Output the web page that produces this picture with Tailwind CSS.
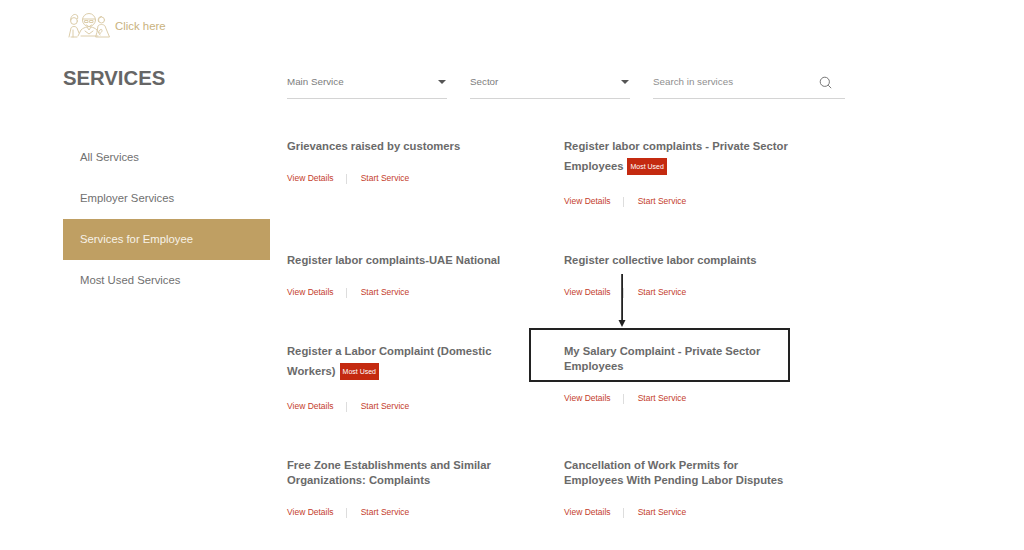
<!DOCTYPE html>
<html>
<head>
<meta charset="utf-8">
<script src="https://cdn.jsdelivr.net/npm/@tailwindcss/browser@4"></script>
</head>
<body class="bg-white">
<div class="relative w-[1024px] h-[550px] overflow-hidden bg-white font-['Liberation_Sans',Arial,sans-serif] text-[#6a6a6a]">
  <header class="h-[52px] pl-[68px] pt-[12px] flex items-start gap-[5px]">
    <svg width="42" height="27" viewBox="0 0 42 27" fill="none" stroke="#dccdaa" stroke-width="1" stroke-linecap="round" stroke-linejoin="round">
      <circle cx="6" cy="9" r="3.4"/>
      <path d="M2.6 8c0-4 3-6 5-5.500 2 .5 2.500 2 2 4M1 25l2-9c1-2 5-2 6 0l2 5M5 18v7M3 25h6"/>
      <circle cx="21" cy="8" r="6.500"/>
      <path d="M15 7h12M17 8.500h3v2h-3zM22 8.500h3v2h-3zM18.500 13l2.500 2 2.500-2"/>
      <path d="M10 24l3-6c2-2 4-2.500 6-3l2 3 2-3c2 .5 4 1 6 3l3 5M13 24h17M17 19l4 3 4-3"/>
      <circle cx="33.500" cy="8" r="3"/>
      <path d="M33.500 4.500c-2.500 0-4 2-3 5M29 20l1-6c1-2 6-2 7 0l2 5 2.500 6H28zM32 18c.5-1 2-1 2 .5s-1 2-2 3c-1-1-2-2.500 0-3.500z"/>
    </svg>
    <span class="text-[11.4px] leading-[29px] text-[#c9b27e]">Click here</span>
  </header>

  <div class="flex">
    <aside class="w-[224px] ml-[63px] shrink-0">
      <h1 class="text-[20.3px] leading-[28px] font-bold text-[#666] mt-[12px]">SERVICES</h1>
      <nav class="mt-[45px] w-[207px] text-[11.3px] text-[#707070]">
        <div class="h-[41px] pl-[17px] leading-[41px]">All Services</div>
        <div class="h-[41px] pl-[17px] leading-[41px]">Employer Services</div>
        <div class="h-[41px] pl-[17px] leading-[41px] bg-[#bf9f63] text-[#f7f2e8]">Services for Employee</div>
        <div class="h-[41px] pl-[17px] leading-[41px]">Most Used Services</div>
      </nav>
    </aside>

    <main class="flex-1 min-w-0">
      <div class="flex h-[47px] text-[9.8px] text-[#7d7d7d] pt-[13px]">
        <div class="w-[160px] mr-[23px] h-[34px] border-b border-[#d4d4d4] flex justify-between pr-[1px] pt-[10px]">
          <span class="leading-[14px]">Main Service</span>
          <span class="w-0 h-0 mt-[5px] border-x-[4.500px] border-x-transparent border-t-[4px] border-t-[#555]"></span>
        </div>
        <div class="w-[160px] mr-[23px] h-[34px] border-b border-[#d4d4d4] flex justify-between pr-[1px] pt-[10px]">
          <span class="leading-[14px]">Sector</span>
          <span class="w-0 h-0 mt-[5px] border-x-[4.500px] border-x-transparent border-t-[4px] border-t-[#555]"></span>
        </div>
        <div class="w-[192px] h-[34px] border-b border-[#d4d4d4] flex justify-between pr-[13px] pt-[10px] text-[#8f8f8f]">
          <span class="leading-[14px]">Search in services</span>
          <svg width="13" height="13" viewBox="0 0 13 13" fill="none" stroke="#777" stroke-width="1" class="mt-[1px]"><circle cx="5.800" cy="5.800" r="4.600"/><path d="M9.200 9.200l3 3"/></svg>
        </div>
      </div>

      <div class="grid grid-cols-[277px_260px] grid-rows-[114px_91px_114px_90px] mt-[37px] text-[11.25px] leading-[15px]">
        <article>
          <h2 class="font-bold pt-[3px] h-[37px]">Grievances raised by customers</h2>
          <div class="flex items-center text-[8.5px] leading-[11px] text-[#c4402c]"><span>View Details</span><span class="w-px h-[10px] bg-[#ddd] ml-[12px] mr-[14px]"></span><span>Start Service</span></div>
        </article>
        <article>
          <h2 class="font-bold leading-[20px] h-[60px]"><span class="block">Register labor complaints - Private Sector</span><span class="flex items-center gap-[4px]">Employees <span class="inline-block bg-[#c42a10] text-white font-normal text-[7px] leading-[17px] px-[3px] h-[17px]">Most Used</span></span></h2>
          <div class="flex items-center text-[8.5px] leading-[11px] text-[#c4402c]"><span>View Details</span><span class="w-px h-[10px] bg-[#ddd] ml-[12px] mr-[14px]"></span><span>Start Service</span></div>
        </article>
        <article>
          <h2 class="font-bold pt-[3px] h-[37px]">Register labor complaints-UAE National</h2>
          <div class="flex items-center text-[8.5px] leading-[11px] text-[#c4402c]"><span>View Details</span><span class="w-px h-[10px] bg-[#ddd] ml-[12px] mr-[14px]"></span><span>Start Service</span></div>
        </article>
        <article>
          <h2 class="font-bold pt-[3px] h-[37px]">Register collective labor complaints</h2>
          <div class="flex items-center text-[8.5px] leading-[11px] text-[#c4402c]"><span>View Details</span><span class="w-px h-[10px] bg-[#ddd] ml-[12px] mr-[14px]"></span><span>Start Service</span></div>
        </article>
        <article>
          <h2 class="font-bold leading-[20px] h-[60px]"><span class="block">Register a Labor Complaint (Domestic</span><span class="flex items-center gap-[4px]">Workers) <span class="inline-block bg-[#c42a10] text-white font-normal text-[7px] leading-[17px] px-[3px] h-[17px]">Most Used</span></span></h2>
          <div class="flex items-center text-[8.5px] leading-[11px] text-[#c4402c]"><span>View Details</span><span class="w-px h-[10px] bg-[#ddd] ml-[12px] mr-[14px]"></span><span>Start Service</span></div>
        </article>
        <article>
          <h2 class="font-bold pt-[3px] h-[52px]">My Salary Complaint - Private Sector<br>Employees</h2>
          <div class="flex items-center text-[8.5px] leading-[11px] text-[#c4402c]"><span>View Details</span><span class="w-px h-[10px] bg-[#ddd] ml-[12px] mr-[14px]"></span><span>Start Service</span></div>
        </article>
        <article>
          <h2 class="font-bold pt-[3px] h-[52px]">Free Zone Establishments and Similar<br>Organizations: Complaints</h2>
          <div class="flex items-center text-[8.5px] leading-[11px] text-[#c4402c]"><span>View Details</span><span class="w-px h-[10px] bg-[#ddd] ml-[12px] mr-[14px]"></span><span>Start Service</span></div>
        </article>
        <article>
          <h2 class="font-bold pt-[3px] h-[52px]">Cancellation of Work Permits for<br>Employees With Pending Labor Disputes</h2>
          <div class="flex items-center text-[8.5px] leading-[11px] text-[#c4402c]"><span>View Details</span><span class="w-px h-[10px] bg-[#ddd] ml-[12px] mr-[14px]"></span><span>Start Service</span></div>
        </article>
      </div>
    </main>
  </div>

  <!-- annotation drawn over the page -->
  <div class="absolute left-[529px] top-[328px] w-[261px] h-[54px] border-2 border-[#222]"></div>
  <svg class="absolute left-[617px] top-[274px]" width="10" height="54" viewBox="0 0 10 54" fill="#222"><rect x="4.200" y="0" width="1.800" height="47"/><path d="M1.500 46h7l-3.500 7z"/></svg>
</div>
</body>
</html>
